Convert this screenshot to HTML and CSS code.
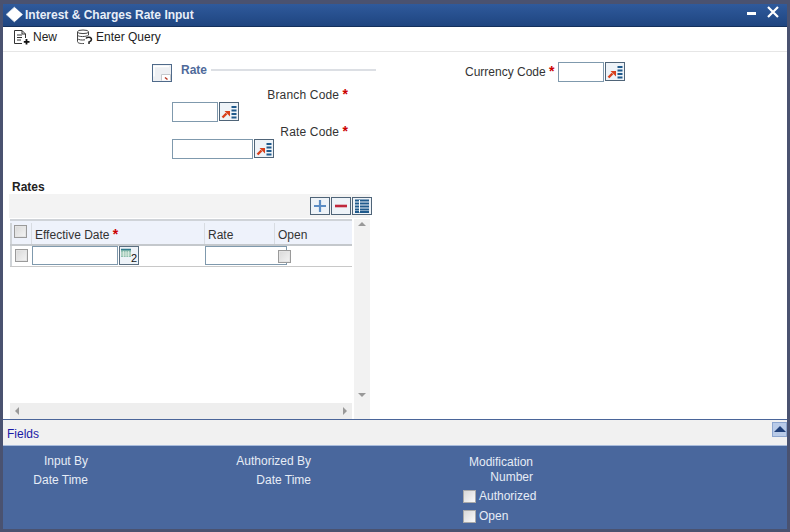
FILE: index.html
```html
<!DOCTYPE html>
<html lang="en">
<head>
<meta charset="utf-8">
<title>Interest &amp; Charges Rate Input</title>
<link rel="stylesheet" href="styles.css">
</head>
<body>
<div class="window">
  <header class="titlebar">
    <svg class="logo" width="19" height="17" viewBox="0 0 17 17" preserveAspectRatio="none"><path d="M8.500 1 16 8.500 8.500 16 1 8.500Z" fill="#fff"/><path d="M8.500 1 1 8.500 8.500 16" fill="none" stroke="#bcd" stroke-width=".8"/></svg>
    <h1 class="title">Interest &amp; Charges Rate Input</h1>
    <div class="winctl">
      <svg width="10" height="10" viewBox="0 0 10 10"><rect x="0" y="6" width="9" height="3" fill="#fff"/></svg>
      <svg width="12" height="12" viewBox="0 0 12 12"><path d="M1 1 11 11M11 1 1 11" stroke="#fff" stroke-width="2.200"/></svg>
    </div>
  </header>
  <nav class="toolbar">
    <span class="tool tool-new">
      <svg width="18" height="16" viewBox="0 0 18 16"><path d="M1.500 14.500V1.500H9L12.500 5V9M1.500 14.500H9M9 1.500V5H12.500M4 6H9M4 8.500H9M4 11H8" fill="none" stroke="#333" stroke-width="1"/><path d="M13.500 10V15.500M10.800 12.800H16.500" stroke="#111" stroke-width="1.800"/></svg>
      New
    </span>
    <span class="tool tool-query">
      <svg width="17" height="16" viewBox="0 0 17 16"><ellipse cx="7" cy="2.800" rx="5.500" ry="1.800" fill="none" stroke="#444"/><path d="M1.500 2.800V12.500C1.500 14 4 14.800 8 14.500M12.500 2.800V6M1.500 6.200C2.500 8 10 8 12.500 6.200M1.500 9.500C2.500 11 6 11.300 9 10.800" fill="none" stroke="#444"/><path d="M10 9.500C11 7.500 15.500 7.800 15.500 10.500C15.500 12 14 12.500 13 13V15" fill="none" stroke="#222" stroke-width="1.500"/></svg>
      Enter Query
    </span>
  </nav>
  <main class="content">
    <section class="form">
      <div class="form-left">
        <div class="legend">
          <span class="collapse"><svg width="20" height="18" viewBox="0 0 20 18"><rect x=".5" y=".5" width="19" height="17" fill="#eef0f3" stroke="#4f6a8a"/><path d="M2 12.500V2.500H17" fill="none" stroke="#fff" stroke-width="1.500"/><path d="M9.500 16.500V10.500H18.500V16.500" fill="#fff" stroke="#c4c8cc"/><path d="M13 13.500 15.500 15.500" stroke="#b5321e" stroke-width="1.500"/></svg></span>
          <span class="legend-text">Rate</span>
          <span class="legend-line"></span>
        </div>
        <div class="field branch">
          <div class="label"><span class="label-text">Branch Code</span> <span class="req">*</span></div>
          <div class="ctl">
            <span class="input w46"></span>
            <span class="lov"><svg width="16" height="14" viewBox="0 0 16 14"><path d="M1.500 12.500 5.500 8.500" stroke="#d8401c" stroke-width="2.400"/><path d="M3.500 6H9V11.500Z" fill="#d8401c"/><path d="M10.500 2H15.500M10.500 5.500H15.500M10.500 9H15.500M10.500 12.500H15.500" stroke="#1f5a8c" stroke-width="1.800"/></svg></span>
          </div>
        </div>
        <div class="field ratecode">
          <div class="label"><span class="label-text">Rate Code</span> <span class="req">*</span></div>
          <div class="ctl">
            <span class="input w82"></span>
            <span class="lov"><svg width="16" height="14" viewBox="0 0 16 14"><path d="M1.500 12.500 5.500 8.500" stroke="#d8401c" stroke-width="2.400"/><path d="M3.500 6H9V11.500Z" fill="#d8401c"/><path d="M10.500 2H15.500M10.500 5.500H15.500M10.500 9H15.500M10.500 12.500H15.500" stroke="#1f5a8c" stroke-width="1.800"/></svg></span>
          </div>
        </div>
      </div>
      <div class="form-right">
        <span class="plain-label">Currency Code <span class="req">*</span></span>
        <span class="input w46"></span>
        <span class="lov"><svg width="16" height="14" viewBox="0 0 16 14"><path d="M1.500 12.500 5.500 8.500" stroke="#d8401c" stroke-width="2.400"/><path d="M3.500 6H9V11.500Z" fill="#d8401c"/><path d="M10.500 2H15.500M10.500 5.500H15.500M10.500 9H15.500M10.500 12.500H15.500" stroke="#1f5a8c" stroke-width="1.800"/></svg></span>
      </div>
    </section>
    <section class="rates">
      <h2 class="rates-title">Rates</h2>
      <div class="rates-actions">
        <span class="act"><svg width="14" height="14" viewBox="0 0 14 14"><path d="M7 1V13M1 7H13" stroke="#5b8cc4" stroke-width="2.200"/></svg></span>
        <span class="act"><svg width="14" height="14" viewBox="0 0 14 14"><path d="M1 7H13" stroke="#c0283c" stroke-width="2.600"/></svg></span>
        <span class="act"><svg width="16" height="14" viewBox="0 0 16 14"><path d="M1 1.500H15M1 4.500H15M1 7.500H15M1 10.500H15M1 13H15" stroke="#1f5a8c" stroke-width="1.800"/><path d="M5.500 1V13.500" stroke="#fff"/></svg></span>
      </div>
      <div class="grid-wrap">
        <div class="grid">
          <div class="g-head">
            <div class="c c-check"><span class="chk"></span></div>
            <div class="c c-date">Effective Date <span class="req">*</span></div>
            <div class="c c-rate">Rate</div>
            <div class="c c-open">Open</div>
          </div>
          <div class="g-row">
            <div class="c c-check"><span class="chk"></span></div>
            <div class="c c-date">
              <span class="input cell-date"></span>
              <span class="cal"><svg width="18" height="16" viewBox="0 0 18 16"><rect x="1" y="2" width="10" height="8" fill="#8fc0b0"/><path d="M1 2.500H11" stroke="#2f7a8c" stroke-width="1.500"/><path d="M3.500 4V10M6 4V10M8.500 4V10M1 6H11M1 8H11" stroke="#e8f2e8" stroke-width=".7"/></svg><b class="cal-num">2</b></span>
            </div>
            <div class="c c-rate"><span class="input cell-rate"></span></div>
            <div class="c c-open"><span class="chk"></span></div>
          </div>
        </div>
        <div class="vscroll"><span class="arrow up"></span><span class="arrow down"></span></div>
        <div class="hscroll"><span class="arrow left"></span><span class="arrow right"></span></div>
      </div>
    </section>
  </main>
  <div class="fields-bar">
    <span class="fields-link">Fields</span>
    <span class="fields-toggle"><span class="tri"></span></span>
  </div>
  <footer class="audit">
    <div class="audit-col col1"><div>Input By</div><div>Date Time</div></div>
    <div class="audit-col col2"><div>Authorized By</div><div>Date Time</div></div>
    <div class="audit-col3">
      <div class="mod">Modification<br>Number</div>
      <div class="cb-line"><span class="cb"></span>Authorized</div>
      <div class="cb-line"><span class="cb"></span>Open</div>
    </div>
  </footer>
</div>
</body>
</html>
```
FILE: styles.css
```css
* { box-sizing: border-box; }
html, body { margin: 0; height: 100%; }
body {
  width: 790px;
  height: 532px;
  overflow: hidden;
  background: #4a5270;
  padding: 4px 3px 3px;
  font: 12px "Liberation Sans", Arial, sans-serif;
  color: #333;
}
.window { display: flex; flex-direction: column; height: 525px; background: #fff; }

.titlebar {
  height: 23px;
  flex: none;
  display: flex;
  align-items: center;
  background: linear-gradient(#2f5a9c, #1f4580);
  border-bottom: 1px solid #14305c;
  color: #e8eef8;
}
.logo { margin: -2px 0 0 2px; }
.title { margin: 0 0 0 1px; font-size: 12px; font-weight: bold; }
.winctl { margin-left: auto; display: flex; align-items: flex-start; gap: 10px; padding: 0 8px 6px 0; }

.toolbar {
  height: 25px;
  flex: none;
  display: flex;
  align-items: center;
  border-bottom: 1px solid #e6e6e6;
  padding: 0 0 4px 10px;
  color: #222;
}
.tool { display: flex; align-items: center; gap: 2px; }
.tool-query { margin-left: 19px; gap: 3px; }

.content { flex: 1; min-height: 0; display: flex; flex-direction: column; }
.form { height: 128px; flex: none; display: flex; }
.form-left { width: 373px; padding: 12px 0 0 149px; }
.legend { display: flex; align-items: center; height: 18px; }
.collapse { display: flex; }
.legend-text { margin: -6px 0 0 9px; font-weight: bold; color: #4f6a9a; }
.legend-line { margin: -6px 0 0 4px; flex: 1; height: 2px; background: #dcdfe4; }
.field .label { text-align: right; padding-right: 28px; line-height: 14px; }
.label-text { letter-spacing: .17px; }
.branch { margin-top: 6px; }
.ratecode { margin-top: 3px; }
.field .ctl { display: flex; margin: 0 0 0 20px; }
.req { color: #c00; font-weight: bold; font-size: 14px; line-height: 12px; }
.form-right { display: flex; align-items: flex-start; padding: 10px 0 0 89px; }
.plain-label { line-height: 20px; margin-right: 3px; }
.input { display: inline-block; height: 20px; background: #fff; border: 1px solid #7f99ad; }
.w46 { width: 46px; }
.w82 { width: 81px; }
.lov {
  display: inline-flex; align-items: center; justify-content: center;
  width: 20px; height: 19px; margin-left: 1px;
  background: #eef3f8; border: 1px solid #4f6478;
}

.rates { flex: 1; min-height: 0; display: flex; flex-direction: column; padding-left: 6px; }
.rates-title { margin: 0 0 0 3px; font-size: 12px; font-weight: bold; color: #222; line-height: 14px; }
.rates-actions {
  width: 361px; height: 24px; flex: none; display: flex; justify-content: flex-end; align-items: flex-start;
  gap: 1px; padding-top: 3px; background: #f3f3f3;
}
.act {
  display: flex; align-items: center; justify-content: center;
  width: 20px; height: 18px; background: #eef3f8; border: 1px solid #4f6478;
}
.rates-actions .act:last-child { margin-right: -2px; }
.grid-wrap { flex: 1; min-height: 0; width: 360px; margin: 1px 0 0 1px; display: grid; grid-template-columns: 342px 2px 16px; grid-template-rows: 1fr 16px; }
.grid { grid-column: 1; grid-row: 1; border-top: 2px solid #cfd3d8; }
.g-head, .g-row { display: flex; }
.g-head { height: 25px; background: #eef2fb; border-bottom: 2px solid #c4c8cc; line-height: 25px; padding-top: 2px; }
.g-head .c-check { padding-top: 2px; }
.g-row { height: 21px; border-bottom: 1px solid #c8c8c8; }
.c { flex: none; padding-left: 3px; border-left: 1px solid #d8dce2; }
.c-check { width: 21px; border-left: 2px solid #d0d4d8; padding: 3px 0 0 2px; }
.c-date { width: 173px; display: flex; gap: 1px; }
.g-head .c-date { display: block; }
.c-rate { width: 70px; }
.c-open { width: 78px; }
.g-row .c { padding: 0; border-left: 0; }
.g-row .c-check { padding: 3px 0 0 3px; border-left: 2px solid #d0d4d8; }
.g-row .c-date { padding-left: 1px; }
.cell-date { width: 86px; height: 19px; }
.cell-rate { width: 82px; height: 19px; position: relative; z-index: 1; margin-left: 1px; }
.g-row .c-open { padding: 4px 0 0 4px; }
.g-row .c-open .chk { position: relative; z-index: 2; }
.cal {
  display: inline-flex; align-items: flex-start; width: 20px; height: 19px;
  background: #eef3f8; border: 1px solid #5a6e80; position: relative;
}
.cal-num { position: absolute; right: 1px; bottom: 0; font-size: 11px; font-weight: normal; color: #111; line-height: 11px; }
.chk { display: block; width: 13px; height: 13px; background: linear-gradient(135deg, #d8d8d8, #f4f4f4); border: 1px solid #9a9a9a; box-shadow: inset 0 0 0 1px #e4e4e4; }
.vscroll { grid-column: 3; grid-row: 1 / 3; background: #f2f2f2; position: relative; }
.hscroll { grid-column: 1 / 2; grid-row: 2; background: #eeeeee; position: relative; }
.arrow { position: absolute; width: 0; height: 0; border: 4px solid transparent; }
.up { top: 3px; left: 4px; border-bottom-color: #999; border-top-width: 0; }
.down { bottom: 22px; left: 4px; border-top-color: #999; border-bottom-width: 0; }
.left { left: 5px; top: 4px; border-right-color: #999; border-left-width: 0; }
.right { right: 5px; top: 4px; border-left-color: #999; border-right-width: 0; }

.fields-bar {
  height: 27px; flex: none; display: flex; align-items: center; justify-content: space-between;
  background: #f1f1f1; border-top: 1px solid #4a6599; border-bottom: 1px solid #a9bcdc; padding: 2px 0 0 4px;
}
.fields-link { color: #1a1aa6; }
.fields-toggle {
  display: flex; align-items: center; justify-content: center;
  width: 15px; height: 15px; margin-bottom: 9px; background: #b9cbe8; border: 1px solid #8da6cf;
}
.tri { border: 6px solid transparent; border-top-width: 0; border-bottom: 6px solid #1f3f78; }

.audit { height: 83px; flex: none; display: flex; background: #49679d; color: #e6ecf6; }
.audit-col { text-align: right; padding-top: 6px; line-height: 19px; }
.col1 { width: 85px; }
.col2 { width: 223px; }
.audit-col3 { padding-left: 152px; padding-top: 9px; }
.mod { width: 70px; margin-bottom: 1px; text-align: right; line-height: 15px; }
.cb-line { display: flex; align-items: center; height: 20px; }
.cb { width: 13px; height: 13px; margin-right: 3px; background: linear-gradient(135deg, #d8d8d8, #fafafa); border: 1px solid #aaa; }
```
